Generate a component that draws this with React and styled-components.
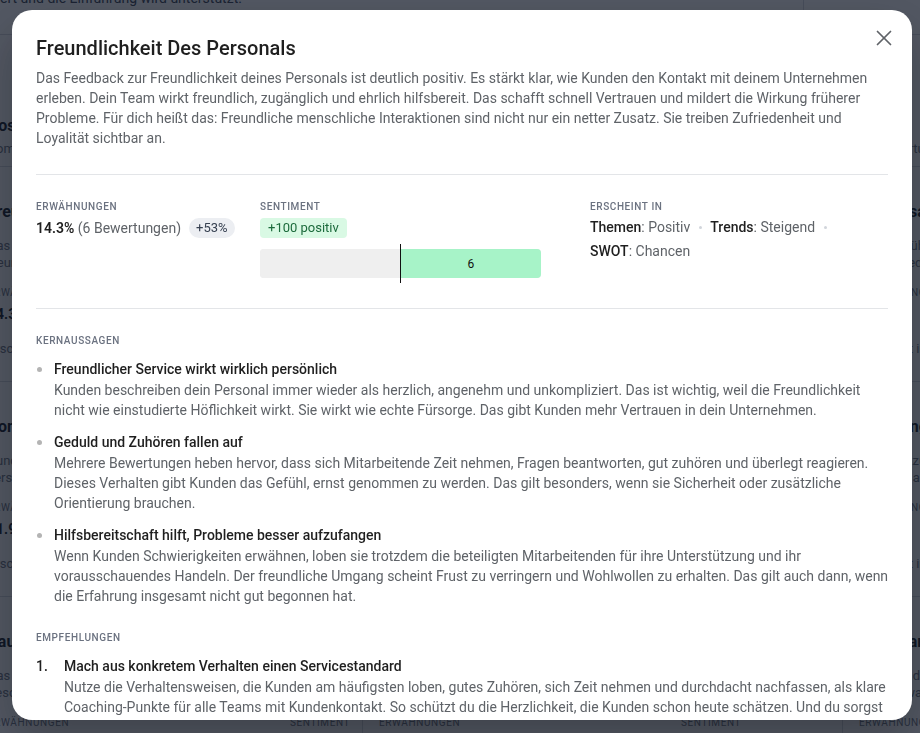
import React from 'react';
import styled, { createGlobalStyle } from 'styled-components';
import { X } from 'lucide-react';

const Global = createGlobalStyle`
  html, body { margin: 0; padding: 0; overflow: hidden; }
  body { font-family: Roboto, "Noto Sans", "Liberation Sans", sans-serif; background: #f3f4f6; }
  * { box-sizing: border-box; }
`;

/* ---------- background page ---------- */
const BgPage = styled.div`
  width: 100vw;
  height: 100vh;
  overflow: hidden;
  background: #f3f4f6;
`;
const BgTop = styled.div`
  display: grid;
  grid-template-columns: 803px 1fr;
  height: 35px;
  border-bottom: 1px solid #d4d7dd;
  background: #fff;
`;
const BgTopText = styled.div`
  font-size: 14px;
  line-height: 20px;
  color: #374151;
  margin-top: -12px;
  white-space: nowrap;
`;
const BgTopSide = styled.div`
  border-left: 1px solid #d4d7dd;
`;
const BgGrid = styled.div`
  display: grid;
  grid-template-columns: 391px 480px 480px;
  margin-left: -28px;
`;
const BgCol = styled.div`
  background: #fff;
  border-right: 1px solid #d4d7dd;
`;
const BgHead = styled.div`
  padding: 80px 16px 8px;
  border-bottom: 1px solid #d4d7dd;
`;
const BgTitle = styled.div`
  font-size: 16px;
  line-height: 22px;
  font-weight: 700;
  color: #111827;
  white-space: nowrap;
`;
const BgSub = styled.div`
  font-size: 13px;
  line-height: 18px;
  margin-top: 3px;
  color: #6b7280;
  white-space: nowrap;
`;
const BgEntry = styled.div`
  padding: 34px 16px 23px;
  border-bottom: 1px solid #d4d7dd;
`;
const BgDesc = styled.div`
  font-size: 13px;
  line-height: 17px;
  height: 34px;
  overflow: hidden;
  margin-top: 14px;
  color: #6b7280;
`;
const BgStats = styled.div`
  display: grid;
  grid-template-columns: 302px 1fr;
  margin-top: 15px;
`;
const BgLabel = styled.div`
  font-size: 10px;
  line-height: 14px;
  letter-spacing: 0.06em;
  text-transform: uppercase;
  color: #6b7280;
`;
const BgValue = styled.div`
  font-size: 14px;
  line-height: 20px;
  font-weight: 700;
  color: #111827;
  margin-top: 4px;
`;
const BgFoot = styled.div`
  font-size: 13px;
  line-height: 18px;
  margin-top: 16px;
  color: #6b7280;
  white-space: nowrap;
`;

const bgCols = [
  {
    head: ['Positive Themen', 'Kommentare zu Mitarbeitenden'],
    entries: [
      ['Freundlichkeit Des Personals', 'Das Feedback ist deutlich positiv und das Team wirkt freundlich, zugänglich und hilfsbereit.', '14.3%', 'Erscheint in Themen und Trends'],
      ['Kompetente Beratung', 'Kunden loben die fachliche Beratung und die klare, verständliche Kommunikation im Gespräch.', '11.9%', 'Erscheint in Themen und SWOT'],
      ['Saubere Räumlichkeiten', 'Das Ambiente wird als angenehm, ruhig und gut gepflegt beschrieben, auch bei hohem Andrang.', '9.5%', 'Erscheint in Themen'],
    ],
  },
  {
    head: ['Trends', 'Veränderungen im Zeitverlauf'],
    entries: [
      ['Steigende Zufriedenheit', 'Die Bewertungen verbessern sich seit mehreren Monaten stetig und Kunden empfehlen dich häufiger weiter als im Vorjahr.', '21.4%', 'Erscheint in Trends'],
      ['Schnellere Abläufe', 'Wartezeiten werden seltener als Problem genannt als zuvor, besonders bei Terminen am Vormittag und am Wochenende.', '7.1%', 'Erscheint in Trends und SWOT'],
      ['Terminvergabe', 'Die Buchung wird als einfach und zuverlässig wahrgenommen, Erinnerungen per E-Mail werden ausdrücklich gelobt.', '4.8%', 'Erscheint in Themen'],
    ],
  },
  {
    head: ['Positiv', '10 Bewertungen'],
    entries: [
      ['Einfühlsamer Umgang', 'Kunden fühlen sich sicher und gut aufgehoben bei Fragen und schätzen die ruhige, geduldige Art des Teams sehr.', '16.7%', 'Erscheint in Themen'],
      ['Hilfe-Angebote', 'Unterstützung bei Problemen wird häufig hervorgehoben, ebenso die schnelle Reaktion auf Rückfragen und Beschwerden.', '9.5%', 'Erscheint in SWOT'],
      ['Transparenz', 'Preise und Abläufe werden verständlich erklärt, sodass Kunden vorab genau wissen, was sie erwartet und was es kostet.', '4.8%', 'Erscheint in Themen'],
    ],
  },
];

function Background() {
  return (
    <BgPage>
      <BgTop>
        <BgTopText>ert und die Einführung wird unterstützt.</BgTopText>
        <BgTopSide />
      </BgTop>
      <BgGrid>
        {bgCols.map((col, i) => (
          <BgCol key={i}>
            <BgHead>
              <BgTitle>{col.head[0]}</BgTitle>
              <BgSub>{col.head[1]}</BgSub>
            </BgHead>
            {col.entries.map((e, j) => (
              <BgEntry key={j}>
                <BgTitle>{e[0]}</BgTitle>
                <BgDesc>{e[1]}</BgDesc>
                <BgStats>
                  <div>
                    <BgLabel>Erwähnungen</BgLabel>
                    <BgValue>{e[2]}</BgValue>
                  </div>
                  <div>
                    <BgLabel>Sentiment</BgLabel>
                    <BgValue>+100</BgValue>
                  </div>
                </BgStats>
                <BgFoot>{e[3]}</BgFoot>
              </BgEntry>
            ))}
          </BgCol>
        ))}
      </BgGrid>
    </BgPage>
  );
}

/* ---------- modal ---------- */
const Overlay = styled.div`
  position: fixed;
  inset: 0;
  background: rgba(17, 24, 39, 0.72);
  display: flex;
  justify-content: center;
  align-items: flex-start;
  padding: 10px 0 0 4px;
`;
const Modal = styled.div`
  position: relative;
  width: 900px;
  flex-shrink: 0;
  height: 710px;
  background: #fff;
  border-radius: 20px;
  overflow: hidden;
  box-shadow: 0 20px 50px rgba(0, 0, 0, 0.25);
`;
const Body = styled.div`
  height: 100%;
  overflow: hidden;
  padding: 24px 24px 40px;
`;
const CloseButton = styled.button`
  position: absolute;
  top: 12px;
  right: 12px;
  width: 32px;
  height: 32px;
  border: 0;
  padding: 0;
  background: transparent;
  color: #5f6368;
  display: flex;
  align-items: center;
  justify-content: center;
  cursor: pointer;
`;
const Title = styled.h2`
  margin: 0;
  font-size: 20px;
  line-height: 28px;
  font-weight: 500;
  color: #1f1f1f;
`;
const Lead = styled.p`
  margin: 6px 0 0;
  font-size: 14px;
  line-height: 20px;
  color: #5f6368;
`;
const Divider = styled.div`
  height: 1px;
  background: #e3e5e8;
  margin-top: ${(p) => p.$top || 0}px;
`;
const Stats = styled.div`
  display: grid;
  grid-template-columns: 224px 330px 1fr;
  padding: 25px 0 30px;
`;
const Label = styled.div`
  font-size: 10px;
  line-height: 14px;
  letter-spacing: 0.06em;
  text-transform: uppercase;
  font-weight: 500;
  color: #6b7280;
`;
const ValueRow = styled.div`
  display: flex;
  align-items: center;
  margin-top: 4px;
  font-size: 14px;
  line-height: 20px;
  color: #5f6368;
`;
const Strong = styled.span`
  font-weight: ${(p) => p.$w || 600};
  color: #1f1f1f;
`;
const Pill = styled.span`
  margin-left: 8px;
  height: 20px;
  line-height: 20px;
  padding: 0 7px;
  border-radius: 10px;
  background: #eceef2;
  color: #374151;
  font-size: 13px;
`;
const Badge = styled.span`
  display: inline-block;
  margin-top: 4px;
  height: 20px;
  line-height: 20px;
  padding: 0 8px;
  border-radius: 4px;
  background: #d9f9e4;
  color: #1c6b3c;
  font-size: 13px;
`;
const BarWrap = styled.div`
  position: relative;
  width: 281px;
  height: 29px;
  margin-top: 11px;
`;
const Track = styled.div`
  display: flex;
  height: 100%;
  border-radius: 4px;
  overflow: hidden;
  background: #efefef;
`;
const Segment = styled.div`
  flex: 1;
  display: flex;
  align-items: center;
  justify-content: center;
  font-size: 12px;
  color: #111;
  background: ${(p) => p.$color};
`;
const CenterLine = styled.div`
  position: absolute;
  left: 140px;
  top: -5px;
  bottom: -5px;
  width: 1px;
  background: #111;
`;
const Appears = styled.div`
  display: flex;
  flex-wrap: wrap;
  align-items: center;
  column-gap: 8px;
  row-gap: 4px;
  margin-top: 3px;
  font-size: 14px;
  line-height: 20px;
  color: #5f6368;
`;
const Dot = styled.span`
  width: 3px;
  height: 3px;
  border-radius: 50%;
  background: #d1d5db;
  margin-left: 1px;
`;
const Section = styled.section`
  margin-top: ${(p) => p.$top}px;
`;
const List = styled.ul`
  list-style: none;
  margin: 11px -4px 0 0;
  padding: 0;
  display: flex;
  flex-direction: column;
  gap: 12px;
`;
const Item = styled.li`
  position: relative;
  padding-left: ${(p) => p.$indent}px;
`;
const Bullet = styled.span`
  position: absolute;
  left: 1px;
  top: 8px;
  width: 5px;
  height: 5px;
  border-radius: 50%;
  background: #b4b4b4;
`;
const Num = styled.span`
  position: absolute;
  left: 0;
  top: 0;
  font-size: 14px;
  line-height: 20px;
  font-weight: 500;
  color: #1f1f1f;
`;
const ItemTitle = styled.div`
  font-size: 14px;
  line-height: 20px;
  font-weight: 500;
  color: #1f1f1f;
`;
const ItemText = styled.div`
  margin-top: 1px;
  font-size: 14px;
  line-height: 20px;
  color: #5f6368;
`;

const keyPoints = [
  {
    t: 'Freundlicher Service wirkt wirklich persönlich',
    d: 'Kunden beschreiben dein Personal immer wieder als herzlich, angenehm und unkompliziert. Das ist wichtig, weil die Freundlichkeit nicht wie einstudierte Höflichkeit wirkt. Sie wirkt wie echte Fürsorge. Das gibt Kunden mehr Vertrauen in dein Unternehmen.',
  },
  {
    t: 'Geduld und Zuhören fallen auf',
    d: 'Mehrere Bewertungen heben hervor, dass sich Mitarbeitende Zeit nehmen, Fragen beantworten, gut zuhören und überlegt reagieren. Dieses Verhalten gibt Kunden das Gefühl, ernst genommen zu werden. Das gilt besonders, wenn sie Sicherheit oder zusätzliche Orientierung brauchen.',
  },
  {
    t: 'Hilfsbereitschaft hilft, Probleme besser aufzufangen',
    d: 'Wenn Kunden Schwierigkeiten erwähnen, loben sie trotzdem die beteiligten Mitarbeitenden für ihre Unterstützung und ihr vorausschauendes Handeln. Der freundliche Umgang scheint Frust zu verringern und Wohlwollen zu erhalten. Das gilt auch dann, wenn die Erfahrung insgesamt nicht gut begonnen hat.',
  },
];

const recommendations = [
  {
    t: 'Mach aus konkretem Verhalten einen Servicestandard',
    d: 'Nutze die Verhaltensweisen, die Kunden am häufigsten loben, gutes Zuhören, sich Zeit nehmen und durchdacht nachfassen, als klare Coaching-Punkte für alle Teams mit Kundenkontakt. So schützt du die Herzlichkeit, die Kunden schon heute schätzen. Und du sorgst dafür, dass sie auch bei neuen Mitarbeitenden spürbar bleibt.',
  },
  {
    t: 'Mach positive Rückmeldungen sichtbar',
    d: 'Teile konkrete Kundenzitate regelmäßig im Team, damit gutes Verhalten erkannt und wiederholt wird.',
  },
];

export default function App() {
  return (
    <>
      <Global />
      <Background />
      <Overlay>
        <Modal role="dialog" aria-label="Freundlichkeit Des Personals">
          <CloseButton aria-label="Schließen">
            <X size={26} strokeWidth={1.6} />
          </CloseButton>
          <Body>
            <Title>Freundlichkeit Des Personals</Title>
            <Lead>
              Das Feedback zur Freundlichkeit deines Personals ist deutlich positiv. Es stärkt klar, wie Kunden den Kontakt mit deinem Unternehmen erleben. Dein Team wirkt freundlich, zugänglich und ehrlich hilfsbereit. Das schafft schnell Vertrauen und mildert die Wirkung früherer Probleme. Für dich heißt das: Freundliche menschliche Interaktionen sind nicht nur ein netter Zusatz. Sie treiben Zufriedenheit und Loyalität sichtbar an.
            </Lead>
            <Divider $top={26} />
            <Stats>
              <div>
                <Label>Erwähnungen</Label>
                <ValueRow>
                  <Strong>14.3%</Strong>&nbsp;(6 Bewertungen)
                  <Pill>+53%</Pill>
                </ValueRow>
              </div>
              <div>
                <Label>Sentiment</Label>
                <Badge>+100 positiv</Badge>
                <BarWrap>
                  <Track>
                    <Segment $color="#efefef" />
                    <Segment $color="#a7f3c8">6</Segment>
                  </Track>
                  <CenterLine />
                </BarWrap>
              </div>
              <div>
                <Label>Erscheint in</Label>
                <Appears>
                  <span><Strong $w={500}>Themen</Strong>: Positiv</span>
                  <Dot />
                  <span><Strong $w={500}>Trends</Strong>: Steigend</span>
                  <Dot />
                  <span><Strong $w={500}>SWOT</Strong>: Chancen</span>
                </Appears>
              </div>
            </Stats>
            <Divider />
            <Section $top={25}>
              <Label>Kernaussagen</Label>
              <List>
                {keyPoints.map((k) => (
                  <Item key={k.t} $indent={18}>
                    <Bullet />
                    <ItemTitle>{k.t}</ItemTitle>
                    <ItemText>{k.d}</ItemText>
                  </Item>
                ))}
              </List>
            </Section>
            <Section $top={25}>
              <Label>Empfehlungen</Label>
              <List as="ol">
                {recommendations.map((r, i) => (
                  <Item key={r.t} $indent={28}>
                    <Num>{i + 1}.</Num>
                    <ItemTitle>{r.t}</ItemTitle>
                    <ItemText>{r.d}</ItemText>
                  </Item>
                ))}
              </List>
            </Section>
          </Body>
        </Modal>
      </Overlay>
    </>
  );
}
